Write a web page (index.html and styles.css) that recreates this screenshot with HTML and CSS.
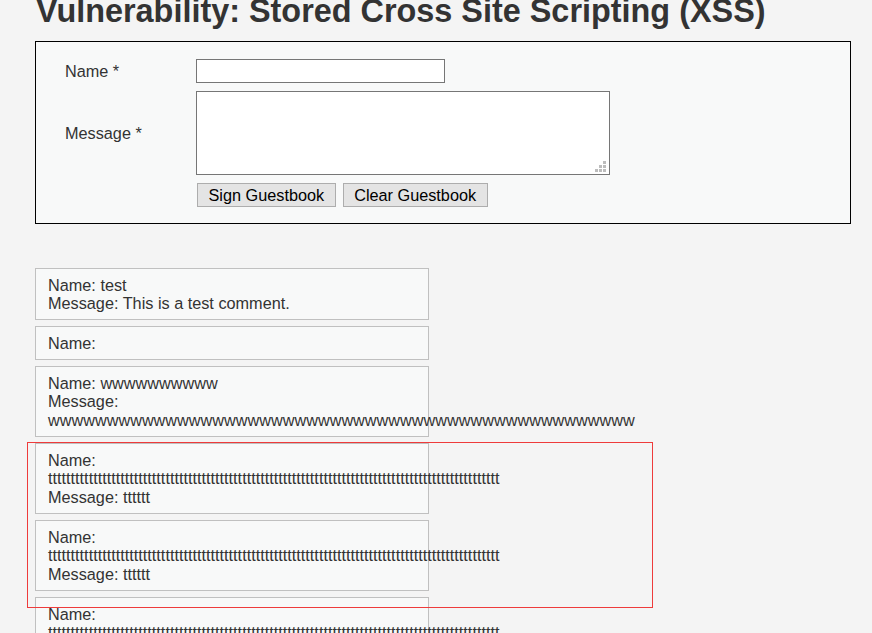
FILE: index.html
```html
<!DOCTYPE html>
<html>
<head>
<meta charset="utf-8">
<title>Vulnerability: Stored Cross Site Scripting (XSS)</title>
<link rel="stylesheet" href="styles.css">
</head>
<body>
<div class="page">
  <h1 class="title">Vulnerability: Stored Cross Site Scripting (XSS)</h1>
  <div class="vulnerable-code">
    <form class="guest-form">
      <label class="form-label" for="txtName">Name *</label>
      <div class="form-field"><input id="txtName" class="name-input" type="text"></div>
      <label class="form-label" for="mtxMessage">Message *</label>
      <div class="form-field"><textarea id="mtxMessage" class="message-input"></textarea></div>
      <div class="form-spacer"></div>
      <div class="form-buttons">
        <button type="button" class="btn">Sign Guestbook</button>
        <button type="button" class="btn">Clear Guestbook</button>
      </div>
    </form>
  </div>
  <div class="comments">
    <div class="comment">Name: test<br>Message: This is a test comment.</div>
    <div class="comment">Name: </div>
    <div class="comment">Name: wwwwwwwwww<br>Message: wwwwwwwwwwwwwwwwwwwwwwwwwwwwwwwwwwwwwwwwwwwwwwwwww</div>
    <div class="comment">Name: tttttttttttttttttttttttttttttttttttttttttttttttttttttttttttttttttttttttttttttttttttttttttttttttttttt<br>Message: tttttt</div>
    <div class="comment">Name: tttttttttttttttttttttttttttttttttttttttttttttttttttttttttttttttttttttttttttttttttttttttttttttttttttt<br>Message: tttttt</div>
    <div class="comment">Name: tttttttttttttttttttttttttttttttttttttttttttttttttttttttttttttttttttttttttttttttttttttttttttttttttttt<br>Message: tttttt</div>
  </div>
</div>
<div class="highlight"></div>
</body>
</html>
```
FILE: styles.css
```css
html, body {
  margin: 0;
  padding: 0;
}
body {
  background: #f4f4f4;
  color: #333333;
  font-family: "Liberation Sans", Arial, sans-serif;
  font-size: 16.25px;
  overflow: hidden;
  height: 633px;
  position: relative;
}
.page {
  margin-top: -7px;
  padding-left: 35px;
}
.title {
  margin: 0 0 12px 1px;
  font-size: 32.4px;
  line-height: 36px;
  font-weight: bold;
  color: #333333;
}
.vulnerable-code {
  width: 816px;
  box-sizing: border-box;
  border: 1px solid #000000;
  background: #f8f9f9;
}
.guest-form {
  display: grid;
  grid-template-columns: 131px auto;
  row-gap: 8px;
  align-items: center;
  padding: 17px 0 16px 29px;
  margin: 0;
}
.form-label {
  color: #333333;
  padding-top: 1px;
}
.form-field {
  display: flex;
}
.name-input {
  width: 249px;
  height: 24px;
  box-sizing: border-box;
  border: 1px solid #767676;
  background: #ffffff;
  margin: 0;
  padding: 1px 2px;
}
.message-input {
  width: 414px;
  height: 84px;
  box-sizing: border-box;
  border: 1px solid #767676;
  margin: 0;
  padding: 2px;
  resize: none;
  background-color: #ffffff;
  background-image:
    linear-gradient(#bdbdbd, #bdbdbd),
    linear-gradient(#bdbdbd, #bdbdbd),
    linear-gradient(#bdbdbd, #bdbdbd),
    linear-gradient(#bdbdbd, #bdbdbd),
    linear-gradient(#bdbdbd, #bdbdbd),
    linear-gradient(#bdbdbd, #bdbdbd);
  background-repeat: no-repeat;
  background-size: 3px 3px;
  background-position:
    right 3px bottom 2px,
    right 7px bottom 2px,
    right 11px bottom 2px,
    right 3px bottom 6px,
    right 7px bottom 6px,
    right 3px bottom 10px;
}
.form-buttons {
  display: flex;
  gap: 7px;
  margin-left: 1px;
}
.btn {
  height: 24px;
  box-sizing: border-box;
  padding: 0 10.5px;
  margin: 0;
  border: 1px solid #adadad;
  background: #e4e4e4;
  color: #000000;
  font-family: "Liberation Sans", Arial, sans-serif;
  font-size: 16.25px;
  line-height: 20px;
}
.comments {
  margin-top: 44px;
  display: flex;
  flex-direction: column;
  gap: 6.2px;
}
.comment {
  width: 394px;
  box-sizing: border-box;
  border: 1px solid #c0c0c0;
  background: #f8f9f9;
  padding: 6.5px 12px;
  line-height: 18.6px;
  color: #333333;
  word-wrap: normal;
  overflow-wrap: normal;
}
.highlight {
  position: absolute;
  left: 27px;
  top: 442px;
  width: 626px;
  height: 166px;
  box-sizing: border-box;
  border: 1px solid #ee3b3b;
}
```
